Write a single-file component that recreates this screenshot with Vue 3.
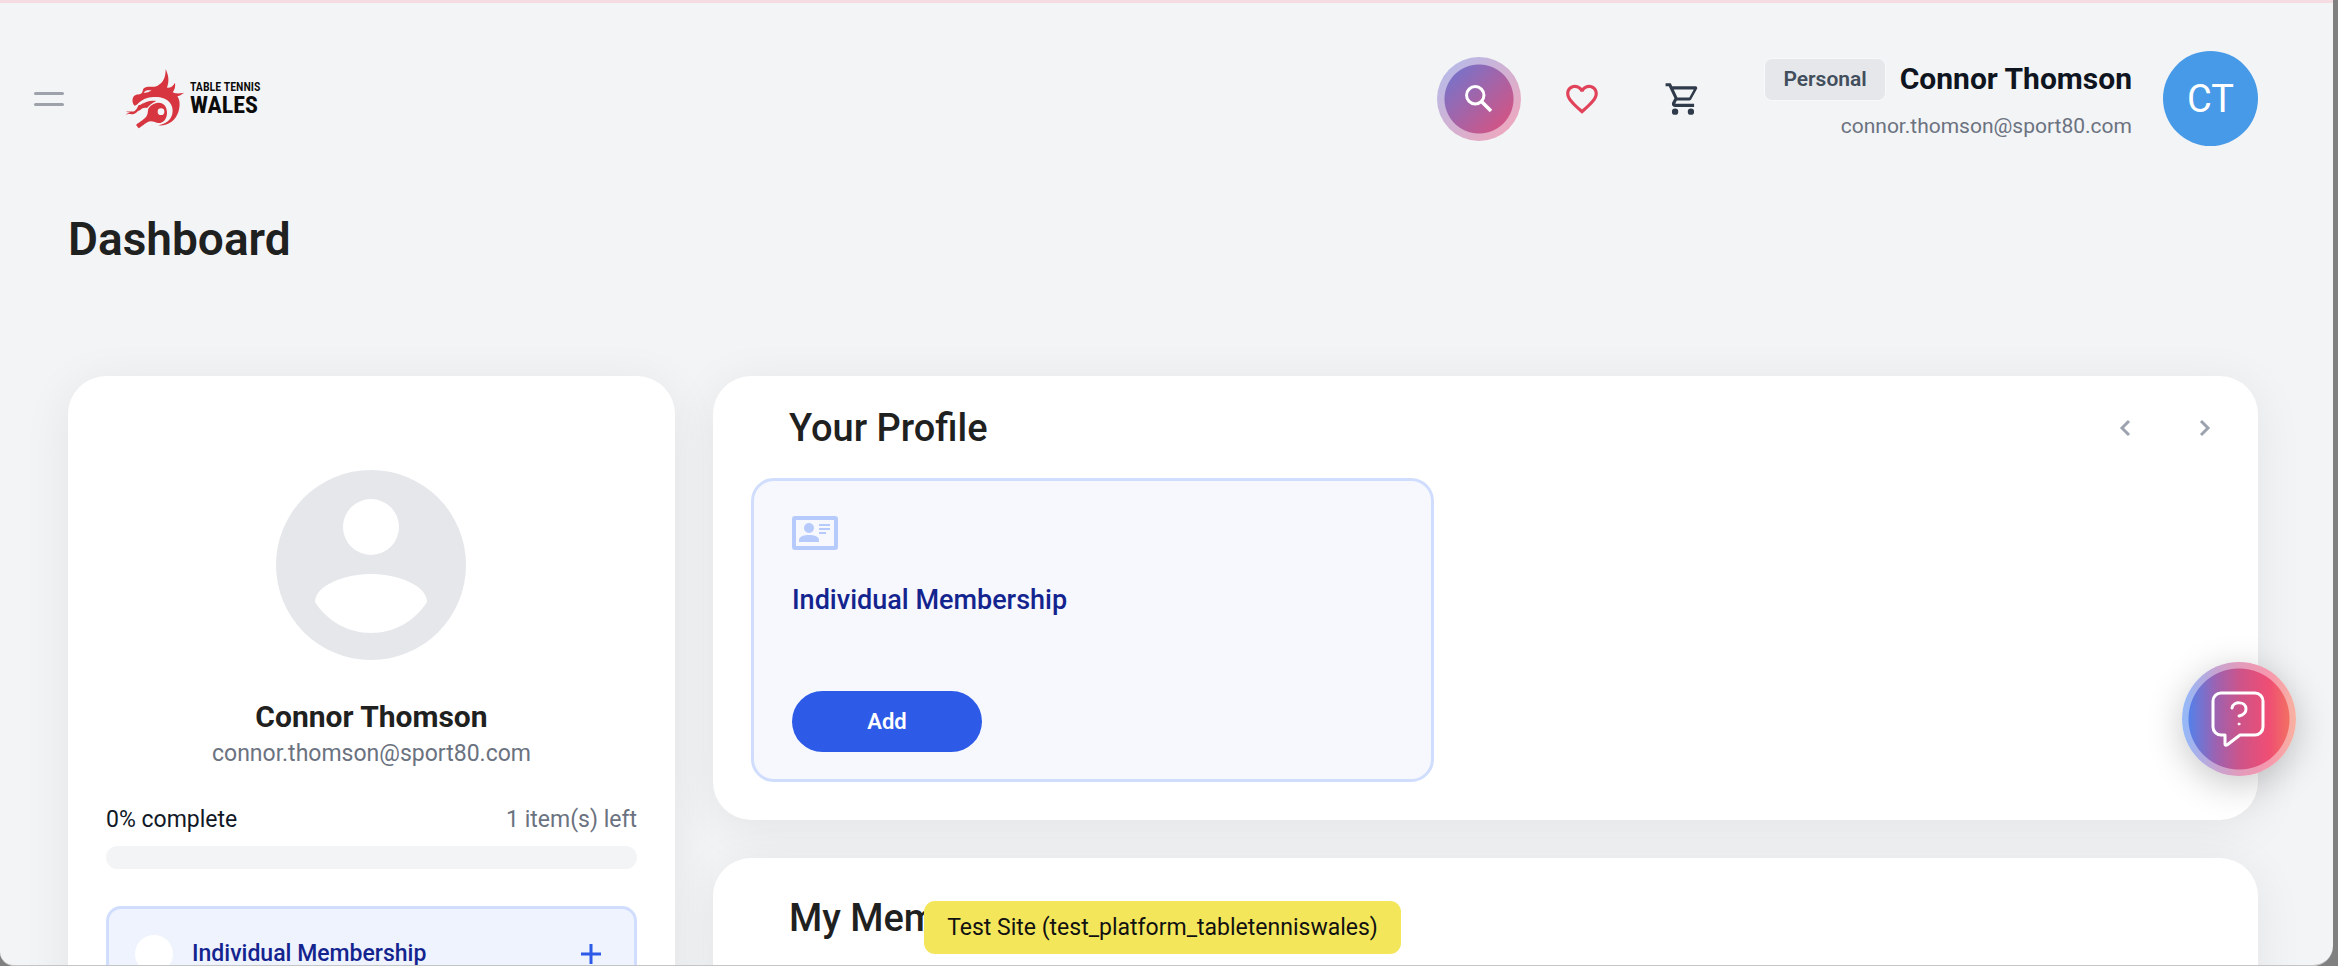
<script setup>
const user = {
  name: 'Connor Thomson',
  email: 'connor.thomson@sport80.com',
  initials: 'CT',
  account: 'Personal',
}
const complete = 0
const items = ['Individual Membership']
</script>

<template>
  <div class="desktop">
    <div class="window">
      <header class="topbar">
        <button class="burger" aria-label="Open menu"><span></span><span></span></button>
        <a class="logo" href="#" aria-label="Table Tennis Wales">
          <svg class="dragon" viewBox="46 41 180 180" aria-hidden="true">
            <path
              fill="#d7353f"
              d="M168 42C176 58 180 76 172 97C183 98 191 92 196 82C198 94 195 103 189 111C201 117 212 114 223 112C216 117 211 121 203 123C211 134 212 152 206 170C198 196 174 213 145 210C166 206 183 196 188 176C194 148 174 128 146 126C122 125 105 134 97 147C90 160 83 174 72 176C64 178 56 174 48 178C53 174 58 173 62 173C58 170 53 171 48 170C61 166 68 172 76 166C84 160 84 150 92 143C85 144 82 149 75 151C67 143 66 129 74 121C81 115 91 119 97 112C101 105 98 100 105 97C116 91 130 98 144 91C161 82 168 66 168 42Z"
            />
            <path fill="#f3f4f6" d="M102 112C108 104 116 104 126 106C119 107 117 112 102 112Z" />
            <path
              fill="#f3f4f6"
              d="M82 148C97 130 121 121 146 126C174 130 187 152 181 177C176 196 163 205 145 208C166 196 177 180 173 160C167 136 143 130 122 135C110 137 101 141 92 149Z"
            />
            <path
              fill="#d7353f"
              d="M92 150C104 139 124 134 140 137C128 142 118 151 112 158C105 156 97 158 92 164L83 168C86 163 88 156 92 150Z"
            />
            <path
              fill="#d7353f"
              d="M145 142C162 141 172 154 172 172C172 190 161 203 147 203C139 203 132 198 123 198C111 199 101 211 87 219L79 209C92 198 106 192 112 180C117 169 112 165 119 156C125 148 135 143 145 142Z"
            />
            <circle cx="154" cy="169" r="10" fill="#f3f4f6" />
          </svg>
          <span class="wordmark"><small>TABLE TENNIS</small><strong>WALES</strong></span>
        </a>
        <div class="actions">
          <button class="search" aria-label="Search">
            <svg width="36" height="36" viewBox="0 0 24 24" fill="none" stroke="#fff" stroke-width="2">
              <circle cx="9.5" cy="9.5" r="5.8" /><path d="M14 14l6 6" stroke-width="2.4" />
            </svg>
          </button>
          <button class="icon" aria-label="Favourites">
            <svg width="38" height="38" viewBox="0 0 24 24" fill="#e0435a">
              <path d="M12.1 18.55l-.1.1-.11-.1C7.14 14.24 4 11.39 4 8.5 4 6.5 5.5 5 7.5 5c1.54 0 3.04 1 3.57 2.36h1.86C13.46 6 14.96 5 16.5 5c2 0 3.5 1.5 3.5 3.5 0 2.89-3.14 5.74-7.9 10.05M16.5 3c-1.74 0-3.41.81-4.5 2.08C10.91 3.81 9.24 3 7.5 3 4.42 3 2 5.41 2 8.5c0 3.77 3.4 6.86 8.55 11.53L12 21.35l1.45-1.32C18.6 15.36 22 12.27 22 8.5 22 5.41 19.58 3 16.5 3z" />
            </svg>
          </button>
          <button class="icon" aria-label="Basket">
            <svg width="38" height="38" viewBox="0 0 24 24" fill="#2f3a4a">
              <path d="M17 18a2 2 0 1 1 0 4 2 2 0 0 1 0-4M1 2h3.27l.94 2H20a1 1 0 0 1 1 1c0 .17-.05.34-.12.5l-3.58 6.47c-.34.61-1 1.03-1.75 1.03H8.1l-.9 1.63-.03.12a.25.25 0 0 0 .25.25H19v2H7a2 2 0 0 1-2-2c0-.35.09-.68.24-.96l1.36-2.45L3 4H1V2m6 16a2 2 0 1 1 0 4 2 2 0 0 1 0-4m9-7l2.78-5H6.14l2.36 5H16z" />
            </svg>
          </button>
        </div>
        <div class="account">
          <div class="account-line"><span class="tag">{{ user.account }}</span><span class="name">{{ user.name }}</span></div>
          <span class="mail">{{ user.email }}</span>
        </div>
        <button class="avatar">{{ user.initials }}</button>
      </header>

      <main>
        <h1>Dashboard</h1>
        <div class="columns">
          <aside class="card person">
            <svg class="portrait" width="190" height="190" viewBox="0 0 190 190" aria-hidden="true">
              <circle cx="95" cy="95" r="95" fill="#e5e7eb" />
              <circle cx="95" cy="57" r="28" fill="#fff" />
              <path fill="#fff" d="M39 132C39 114 72 104 95 104C118 104 151 114 151 132C139 151 118 163 95 163C72 163 51 151 39 132Z" />
            </svg>
            <h2>{{ user.name }}</h2>
            <p class="person-mail">{{ user.email }}</p>
            <div class="status">
              <label for="profile-progress">{{ complete }}% complete</label>
              <span>{{ items.length }} item(s) left</span>
            </div>
            <progress id="profile-progress" :value="complete" max="100"></progress>
            <button v-for="item in items" :key="item" class="todo">
              <span class="dot"></span>
              <span class="todo-name">{{ item }}</span>
              <svg width="22" height="22" viewBox="0 0 22 22" stroke="#2d5be8" stroke-width="3" aria-hidden="true">
                <path d="M11 1v20M1 11h20" />
              </svg>
            </button>
          </aside>

          <div class="stack">
            <section class="card panel">
              <div class="panel-head">
                <h3>Your Profile</h3>
                <button class="arrow" aria-label="Previous">
                  <svg width="12" height="18" viewBox="0 0 12 18"><path d="M10 2L3 9l7 7" /></svg>
                </button>
                <button class="arrow" aria-label="Next">
                  <svg width="12" height="18" viewBox="0 0 12 18"><path d="M2 2l7 7-7 7" /></svg>
                </button>
              </div>
              <article v-for="item in items" :key="item" class="tile">
                <svg width="46" height="34" viewBox="0 0 46 34" fill="#b6cafc" aria-hidden="true">
                  <path fill-rule="evenodd" d="M3 0h40a3 3 0 0 1 3 3v28a3 3 0 0 1-3 3H3a3 3 0 0 1-3-3V3a3 3 0 0 1 3-3zM4 4v26h38V4z" />
                  <circle cx="17" cy="12" r="5" />
                  <path d="M7 26v-2c0-4 6-5 10-5s10 1 10 5v2zM27 8h11v2H27zM27 12h11v2H27zM27 16h7v2h-7z" />
                </svg>
                <h4>{{ item }}</h4>
                <button class="add">Add</button>
              </article>
            </section>
            <section class="card panel memberships">
              <div class="panel-head"><h3>My Memberships</h3></div>
            </section>
          </div>
        </div>
      </main>

      <button class="help" aria-label="Help">
        <svg width="56" height="58" viewBox="0 0 56 58" fill="none" stroke="#fff" stroke-width="3" stroke-linecap="round" stroke-linejoin="round">
          <path d="M10 2h34a8 8 0 0 1 8 8v26a8 8 0 0 1-8 8H29L16 54q-2 1-2-1v-9h-4a8 8 0 0 1-8-8V10a8 8 0 0 1 8-8z" />
          <path d="M21 17c1-7 14-7 14 1 0 4-3 6-7 7" />
          <circle cx="28" cy="33" r="1" fill="#fff" stroke-width="1" />
        </svg>
      </button>
      <div class="site-note">Test Site (test_platform_tabletenniswales)</div>
    </div>
  </div>
</template>

<style>
body {
  background: #808080;
}
</style>

<style scoped>
* {
  box-sizing: border-box;
}
h1, h2, h3, h4, p {
  margin: 0;
}
button {
  border: 0;
  padding: 0;
  background: none;
  font-family: inherit;
  cursor: pointer;
}
svg {
  display: block;
  flex: none;
}
.desktop {
  height: 100vh;
  padding-right: 5px;
  overflow: hidden;
  background: #808080;
  font-family: Roboto, "Liberation Sans", sans-serif;
  color: #1f2121;
}
.window {
  position: relative;
  height: 100%;
  overflow: hidden;
  border-top: 3px solid #f5dbe2;
  border-bottom: 1px solid #c4c5c6;
  border-radius: 0 0 20px 14px;
  background: #f3f4f6;
}
.topbar {
  display: flex;
  align-items: center;
  padding: 48px 75px 0 34px;
}
.burger {
  display: flex;
  flex-direction: column;
  gap: 8px;
  width: 30px;
}
.burger span {
  height: 3px;
  border-radius: 2px;
  background: #9ea3ab;
}
.logo {
  display: flex;
  align-items: center;
  gap: 5px;
  margin-left: 61px;
  color: #0b0b0b;
  text-decoration: none;
}
.dragon {
  width: 60px;
  height: 60px;
}
.wordmark {
  display: flex;
  flex-direction: column;
  font-family: "Liberation Sans Narrow", "Roboto Condensed", Roboto, sans-serif;
  font-weight: 700;
}
.wordmark small {
  font-size: 12px;
  font-weight: 600;
  line-height: 12px;
}
.wordmark strong {
  font-size: 24px;
  font-weight: 700;
  line-height: 24px;
}
.actions {
  display: flex;
  align-items: center;
  margin-left: auto;
  gap: 42px;
}
.search {
  display: grid;
  place-items: center;
  width: 84px;
  height: 84px;
  border-radius: 50%;
  background:
    radial-gradient(circle, transparent 34px, rgba(255, 255, 255, 0.5) 35px),
    linear-gradient(135deg, #5f7bdc, #ec4b70);
}
.icon {
  display: grid;
  place-items: center;
  width: 38px;
}
.icon + .icon {
  margin-left: 21px;
}
.account {
  display: flex;
  flex-direction: column;
  align-items: flex-end;
  gap: 11px;
  margin: 0 31px 0 62px;
}
.account-line {
  display: flex;
  align-items: center;
  gap: 14px;
}
.tag {
  padding: 0 18px;
  border: 1px solid #f8f9fa;
  border-radius: 8px;
  background: #e5e7eb;
  color: #424e5b;
  font-size: 21px;
  font-weight: 600;
  line-height: 41px;
}
.name {
  color: #0f1520;
  font-size: 30px;
  font-weight: 700;
  line-height: 42px;
}
.mail {
  color: #6b7280;
  font-size: 21px;
  line-height: 28px;
}
.avatar {
  width: 95px;
  height: 95px;
  border-radius: 50%;
  background: #479ae7;
  color: #fff;
  font-size: 38px;
}
main {
  padding: 65px 75px 0 68px;
}
h1 {
  font-size: 46px;
  font-weight: 600;
  line-height: 56px;
}
.columns {
  display: grid;
  grid-template-columns: 11fr 28fr;
  gap: 38px;
  margin-top: 109px;
}
.stack {
  display: flex;
  flex-direction: column;
  gap: 38px;
}
.card {
  border-radius: 38px;
  background: #fff;
  box-shadow: 0 8px 50px rgba(0, 0, 0, 0.07);
}
.person {
  display: flex;
  flex-direction: column;
  align-items: stretch;
  padding: 94px 38px 38px;
}
.portrait {
  align-self: center;
}
h2 {
  margin-top: 36px;
  font-size: 30px;
  font-weight: 700;
  line-height: 42px;
  text-align: center;
}
.person-mail {
  color: #6b7280;
  font-size: 23px;
  line-height: 32px;
  text-align: center;
}
.status {
  display: flex;
  justify-content: space-between;
  margin-top: 34px;
  color: #6b7280;
  font-size: 23px;
  line-height: 32px;
}
.status label {
  color: #111827;
}
progress {
  width: 100%;
  height: 23px;
  margin-top: 10px;
  appearance: none;
  border: 0;
  border-radius: 12px;
  overflow: hidden;
  background: #f3f4f6;
}
progress::-webkit-progress-bar {
  background: #f3f4f6;
}
progress::-webkit-progress-value {
  background: #2d5be8;
}
.todo {
  display: flex;
  align-items: center;
  gap: 19px;
  height: 95px;
  margin-top: 37px;
  padding: 0 32px 0 26px;
  border: 3px solid #d0ddfd;
  border-radius: 15px;
  background: #eef3fe;
  color: #14248f;
  font-size: 23px;
  font-weight: 500;
}
.dot {
  width: 38px;
  height: 38px;
  border-radius: 50%;
  background: #fff;
}
.todo-name {
  margin-right: auto;
}
.panel {
  padding: 28px 38px 38px;
}
.memberships {
  min-height: 300px;
  padding-top: 36px;
}
.panel-head {
  display: flex;
  align-items: center;
  padding: 0 3px 0 38px;
}
h3 {
  margin-right: auto;
  font-size: 38px;
  font-weight: 500;
  line-height: 48px;
}
.arrow {
  display: grid;
  place-items: center;
  width: 24px;
  height: 24px;
}
.arrow + .arrow {
  margin-left: 56px;
}
.arrow svg {
  fill: none;
  stroke: #9ca3af;
  stroke-width: 3;
}
.tile {
  display: flex;
  flex-direction: column;
  align-items: flex-start;
  width: 46.5%;
  height: 304px;
  margin-top: 26px;
  padding: 35px 38px 27px;
  border: 3px solid #d0ddfd;
  border-radius: 23px;
  background: #f6f8fe;
}
h4 {
  margin-top: 32px;
  color: #14248f;
  font-size: 27px;
  font-weight: 500;
  line-height: 36px;
}
.add {
  width: 190px;
  height: 61px;
  margin-top: auto;
  border-radius: 31px;
  background: #2d5be8;
  color: #fff;
  font-size: 22px;
  font-weight: 600;
}
.help {
  position: absolute;
  right: 37px;
  bottom: 189px;
  display: grid;
  place-items: center;
  width: 114px;
  height: 114px;
  padding: 2px 0 0;
  border-radius: 50%;
  background:
    radial-gradient(circle, transparent 50px, rgba(255, 255, 255, 0.42) 51px),
    linear-gradient(90deg, #4e83ee 4%, #9d62b0 30%, #cf5388 52%, #ef4e74 76%, #f37a5c 100%);
  box-shadow: 0 8px 36px rgba(0, 0, 0, 0.22);
}
.site-note {
  position: absolute;
  right: 8px;
  bottom: 11px;
  left: 0;
  width: fit-content;
  margin: 0 auto;
  padding: 0 23px;
  border-radius: 11px;
  background: #f3e65b;
  color: #111;
  font-size: 23px;
  line-height: 53px;
  white-space: nowrap;
}
</style>
